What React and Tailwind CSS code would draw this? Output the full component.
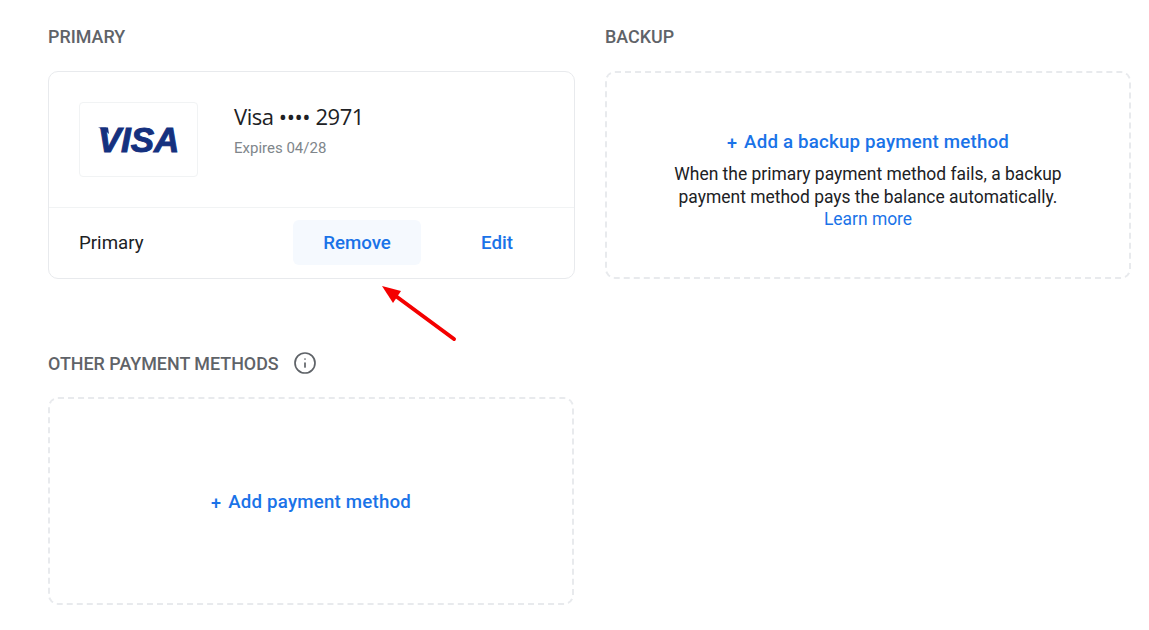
import { Info } from 'lucide-react';

function SectionTitle({ children, icon }) {
    return (
        <div className="flex items-center gap-[14px] h-6 mb-[23px]">
            <h3 className="pt-[2px] text-[17.9px] leading-6 font-medium text-[#5f6368]">{children}</h3>
            {icon}
        </div>
    );
}

function AddLink({ children }) {
    return (
        <a className="flex items-center justify-center gap-[7px] text-[18.7px] leading-6 font-medium text-[#1a73e8] tracking-[0.2px]">
            <span className="text-[18px] leading-6 translate-y-px">+</span>
            {children}
        </a>
    );
}

function DashedBox({ children, className }) {
    return (
        <div className={`flex flex-col items-center justify-center rounded-[10px] border-2 border-dashed border-[#e8eaed] ${className}`}>
            {children}
        </div>
    );
}

function VisaLogo() {
    return (
        <div className="relative flex h-[75px] w-[119px] items-center justify-center rounded border border-[#f1f3f4]">
            <svg className="absolute left-[18px] top-[24px]" width="12" height="8" viewBox="0 0 12 8">
                <path d="M0 0.5 L10 0.5 L11 7 Q7 2.5 0 0.5 Z" fill="#15317f" />
            </svg>
            <span className="-mt-px font-['Liberation_Sans',sans-serif] text-[35px] leading-none font-bold italic tracking-[0px] text-[#15317f] [-webkit-text-stroke:1px_#15317f]">
                VISA
            </span>
        </div>
    );
}

function Arrow() {
    return (
        <svg className="absolute left-[374px] top-[279px]" width="90" height="70" viewBox="0 0 90 70">
            <path d="M80 60 L19 15" stroke="#f40000" strokeWidth="4" strokeLinecap="round" fill="none" />
            <path d="M8 7 L27 12 L19 24 Z" fill="#f40000" />
        </svg>
    );
}

export default function App() {
    return (
        <div className="relative h-[630px] w-[1149px] overflow-hidden bg-white pt-6 pl-12 font-['Roboto',sans-serif]">
            <div className="grid grid-cols-[527px_526px] gap-x-[30px]">
                <div>
                    <SectionTitle>PRIMARY</SectionTitle>
                    <div className="h-[208px] rounded-[10px] border border-[#e8eaed]">
                        <div className="flex h-[136px] items-center gap-9 border-b border-[#f1f3f4] pl-[30px]">
                            <VisaLogo />
                            <div className="-mt-[19px]">
                                <div className="text-[22px] leading-7 text-[#202124] font-['Open_Sans',sans-serif] tracking-[-0.45px]">Visa •••• 2971</div>
                                <div className="mt-[8px] text-[15px] leading-5 text-[#80868b]">Expires 04/28</div>
                            </div>
                        </div>
                        <div className="flex h-[70px] items-center pl-[30px] pr-[13px]">
                            <span className="flex-1 text-[18.7px] text-[#202124]">Primary</span>
                            <button className="-mt-[2px] h-[45px] w-[128px] rounded-md bg-[#f5f9fe] pt-[3px] text-[18.7px] font-medium text-[#1a73e8]">Remove</button>
                            <button className="-mt-[2px] ml-3 h-[45px] w-[128px] rounded-md pt-[3px] text-[18.7px] font-medium text-[#1a73e8]">Edit</button>
                        </div>
                    </div>
                </div>
                <div>
                    <SectionTitle>BACKUP</SectionTitle>
                    <DashedBox className="h-[208px] pt-[10px]">
                        <AddLink>Add a backup payment method</AddLink>
                        <p className="mt-[9px] text-center text-[17.45px] leading-[23px] text-[#202124]">
                            When the primary payment method fails, a backup
                            <br />
                            payment method pays the balance automatically.
                            <br />
                            <a className="block -mt-px text-[#1a73e8]">Learn more</a>
                        </p>
                    </DashedBox>
                </div>
            </div>
            <div className="mt-[72px] w-[526px]">
                <SectionTitle icon={<Info size={24} strokeWidth={1.7} className="text-[#5f6368]" />}>OTHER PAYMENT METHODS</SectionTitle>
                <DashedBox className="-mt-px h-[208px] pt-px">
                    <AddLink>Add payment method</AddLink>
                </DashedBox>
            </div>
            <Arrow />
        </div>
    );
}
